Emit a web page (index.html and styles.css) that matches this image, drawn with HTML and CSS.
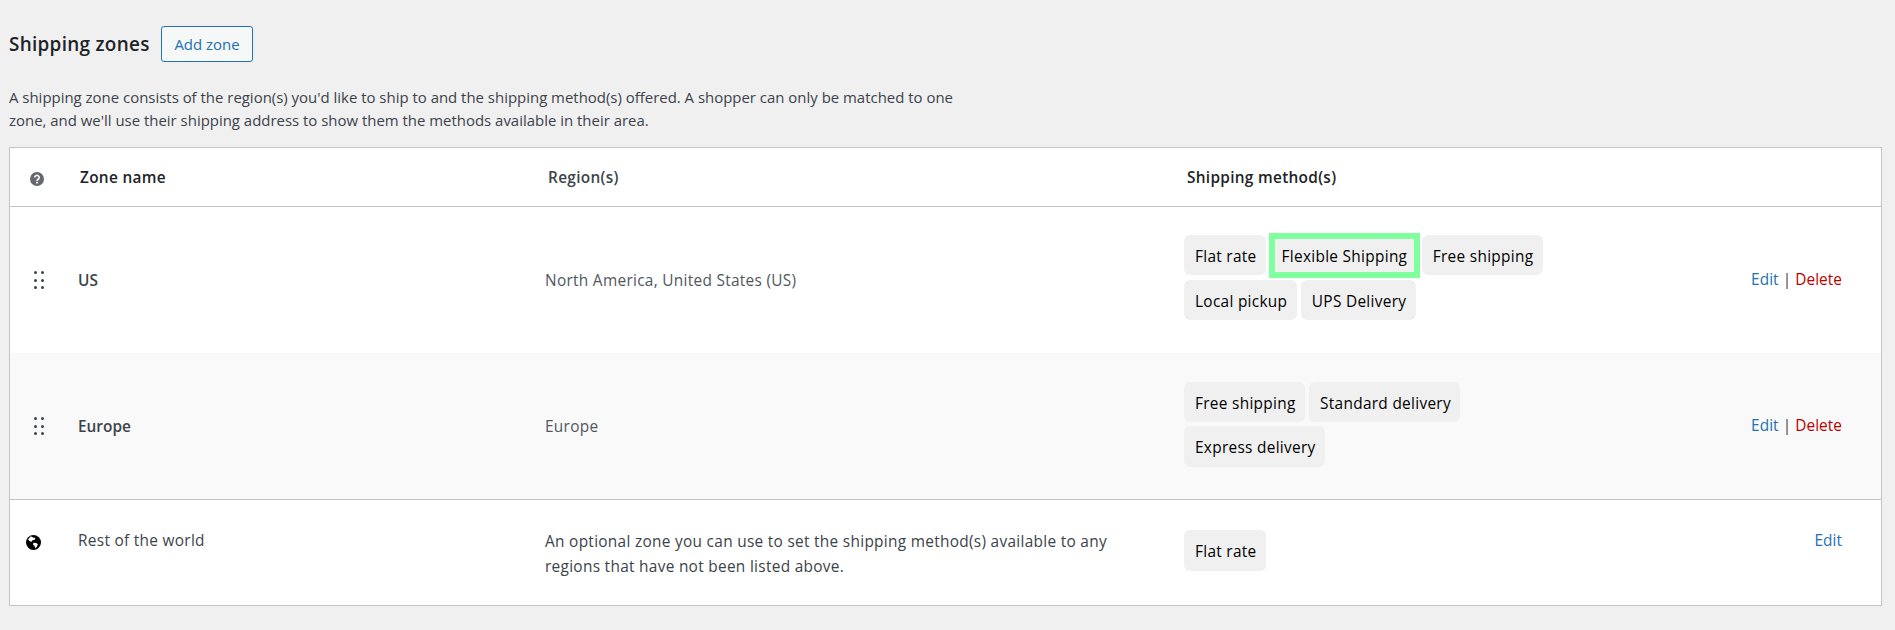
FILE: index.html
```html
<!DOCTYPE html>
<html lang="en">
<head>
<meta charset="utf-8">
<title>Shipping zones</title>
<link rel="stylesheet" href="styles.css">
</head>
<body>
<header class="title-row">
  <h2 class="title">Shipping zones</h2>
  <a class="add-btn">Add zone</a>
</header>
<p class="intro">A shipping zone consists of the region(s) you'd like to ship to and the shipping method(s) offered. A shopper can only be matched to one zone, and we'll use their shipping address to show them the methods available in their area.</p>
<div class="zones">
  <div class="row head">
    <div class="c-icon"><svg class="help" viewBox="0 0 14 14" width="14" height="14"><circle cx="7" cy="7" r="7" fill="#646970"/><path d="M4.8 5.4a2.2 2.1 0 1 1 3.4 1.8c-.8.5-1.2.9-1.2 1.6" fill="none" stroke="#fff" stroke-width="1.6"/><rect x="6.1" y="9.7" width="1.8" height="1.8" fill="#fff"/></svg></div>
    <div class="c-name">Zone name</div>
    <div class="c-region">Region(s)</div>
    <div class="c-methods">Shipping method(s)</div>
  </div>
  <div class="row zone">
    <div class="c-icon"><span class="drag"><i></i><i></i><i></i><i></i><i></i><i></i></span></div>
    <div class="c-name strong">US</div>
    <div class="c-region">North America, United States (US)</div>
    <div class="c-methods"><div class="pills">
      <span class="pill">Flat rate</span><span class="pill hl">Flexible Shipping</span><span class="pill">Free shipping</span><span class="pill">Local pickup</span><span class="pill">UPS Delivery</span>
    </div></div>
    <div class="c-actions"><a class="edit">Edit</a> | <a class="del">Delete</a></div>
  </div>
  <div class="row zone alt">
    <div class="c-icon"><span class="drag"><i></i><i></i><i></i><i></i><i></i><i></i></span></div>
    <div class="c-name strong">Europe</div>
    <div class="c-region">Europe</div>
    <div class="c-methods"><div class="pills">
      <span class="pill">Free shipping</span><span class="pill">Standard delivery</span><span class="pill">Express delivery</span>
    </div></div>
    <div class="c-actions"><a class="edit">Edit</a> | <a class="del">Delete</a></div>
  </div>
  <div class="row world">
    <div class="c-icon"><svg class="globe" viewBox="0 0 16 16" width="15" height="15"><circle cx="8" cy="8" r="8" fill="#000"/><path d="M5.2 1.2 8 3l2-.2L9.3 5 7 5.6 5.6 7.4 3.5 6 2.2 4.6ZM8 8.2l3 .4 1.6 1.3-1 2.6-1.9 1.6-.5-2.4L7.4 10Z" fill="#fff"/></svg></div>
    <div class="c-name">Rest of the world</div>
    <div class="c-region">An optional zone you can use to set the shipping method(s) available to any regions that have not been listed above.</div>
    <div class="c-methods"><div class="pills"><span class="pill">Flat rate</span></div></div>
    <div class="c-actions"><a class="edit">Edit</a></div>
  </div>
</div>
</body>
</html>
```
FILE: styles.css
```css
html, body { margin: 0; padding: 0; }
body {
  background: #f0f0f1;
  color: #3c434a;
  font-family: "Open Sans", "Noto Sans", sans-serif;
  font-size: 14.95px;
  height: 630px;
  overflow: hidden;
  padding: 26px 12px 0 9px;
  box-sizing: border-box;
}
.title-row { display: flex; align-items: center; gap: 12px; height: 36px; }
.title { margin: 0; font-size: 18.9px; font-weight: 600; color: #1d2327; letter-spacing: 0.3px; width: 140px; white-space: nowrap; }
.add-btn {
  box-sizing: border-box; width: 92px; height: 36px; line-height: 34px; text-align: center;
  border: 1px solid #2271b1; border-radius: 3px; background: #f6f7f7; color: #2271b1;
}
.intro { margin: 24px 0 0; width: 950px; line-height: 23px; height: 46px; color: #3c434a; }
.zones { margin-top: 15px; width: 1873px; box-sizing: border-box; border: 1px solid #c3c4c7; background: #fff; font-size: 15.4px; letter-spacing: 0.3px; }
.row { display: grid; grid-template-columns: 60px 475px 639px 1fr 130px; box-sizing: border-box; line-height: 24px; }
.head { height: 59px; padding-top: 2px; border-bottom: 1px solid #c3c4c7; align-items: center; font-weight: 600; color: #1d2327; }
.head .c-icon { margin-top: -2px; }
.head .c-name { padding-left: 10px; }
.head .c-region { padding-left: 3px; }
.head .c-methods { padding-left: 3px; white-space: nowrap; }
.zone { height: 146px; align-items: center; }
.alt { background: #f9f9f9; border-bottom: 1px solid #c3c4c7; height: 147px; }
.world { height: 105px; padding-top: 29px; align-items: start; }
.c-icon { display: flex; justify-content: center; padding-right: 5px; }
.c-name { padding-left: 8px; }
.strong { font-weight: 600; color: #3c434a; letter-spacing: 0; }
.c-region { color: #3c434a; padding-right: 70px; }
.zone .c-name, .zone .c-region { padding-top: 2px; }
.zone .c-region { color: #50575e; }
.world .c-region { line-height: 25px; }
.c-actions { text-align: right; white-space: nowrap; padding-right: 39px; letter-spacing: 0.05px; }
.edit { color: #2271b1; }
.del { color: #b00; }
.pills { display: flex; flex-wrap: wrap; gap: 4px; width: 400px; margin-bottom: 5px; }
.alt .pills { margin-bottom: 4px; }
.world .pills { margin: 1px 0 0; }
.pill {
  box-sizing: border-box; height: 40.5px; line-height: 43px; padding: 0 9.5px 0 11px;
  background: #f0f0f1; border-radius: 6px; color: #000; white-space: nowrap;
}
.hl {
  height: 45px; line-height: 35px; margin: -2px -2px -2px -1px; padding: 0 6.5px;
  border: 6px solid #80ff9f; border-radius: 0;
}
.help { display: block; margin-top: 4px; margin-left: -2px; }
.drag { display: grid; grid-template-columns: 3px 3px; gap: 4.5px 4.5px; margin-left: 3px; }
.drag i { display: block; width: 3px; height: 3px; background: #3c434a; border-radius: 50%; }
.globe { display: block; margin-left: -8px; margin-top: 6px; }
```
